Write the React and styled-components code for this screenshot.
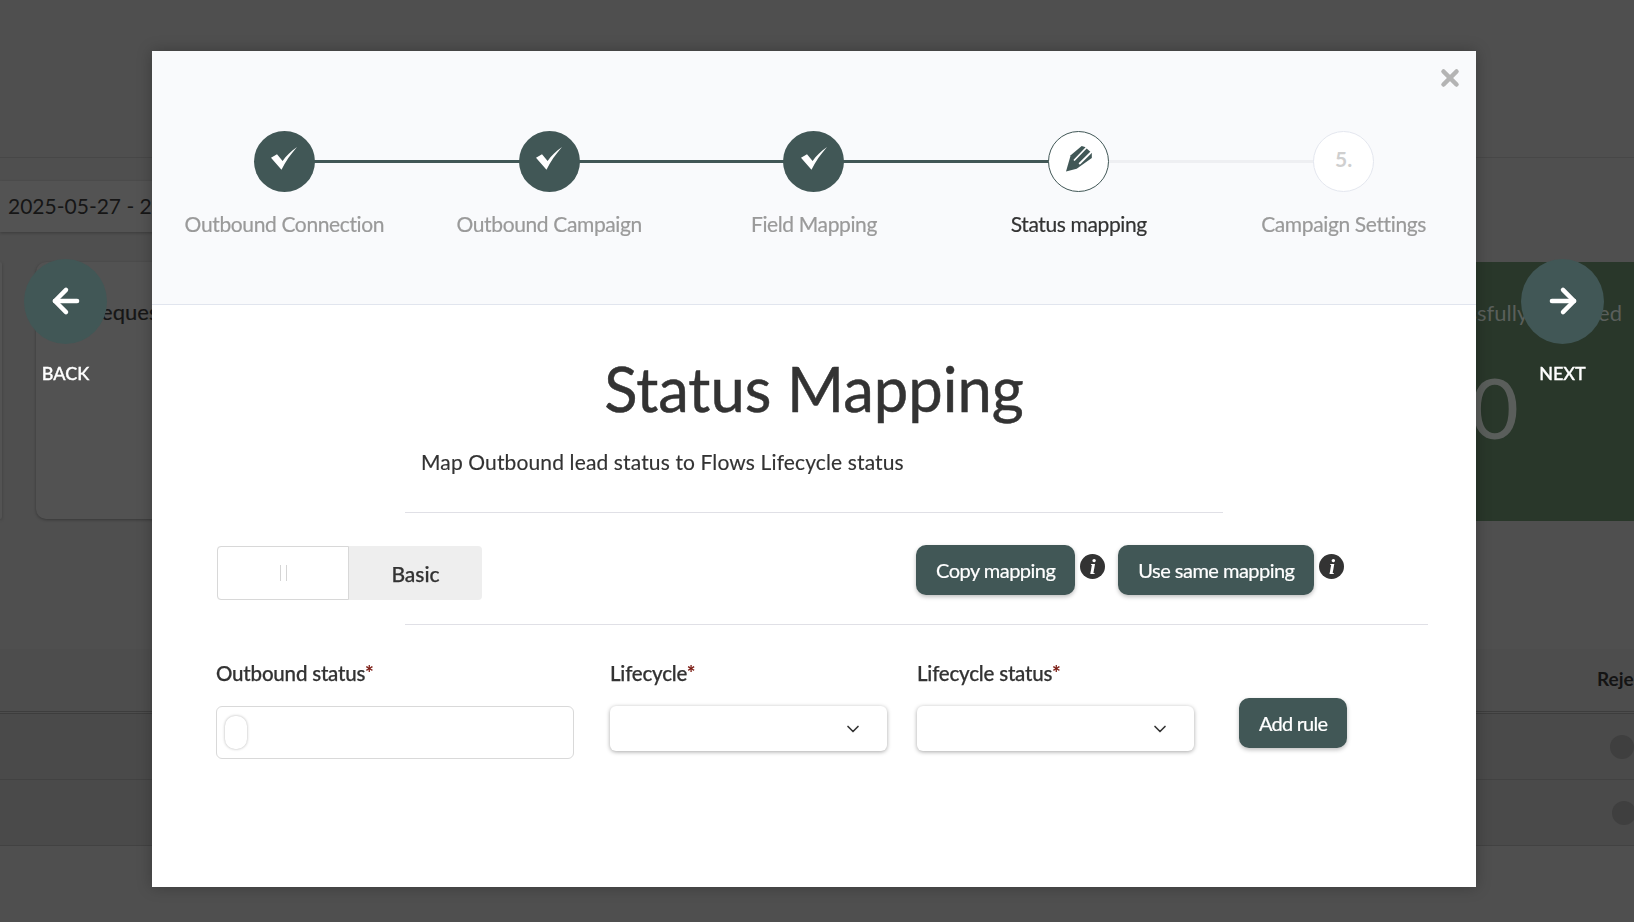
import React from "react";
import styled, { createGlobalStyle } from "styled-components";
import { ArrowLeft, ArrowRight, ChevronDown, X } from "lucide-react";

const GlobalStyle = createGlobalStyle`
  html, body {
    margin: 0;
    height: 100%;
    overflow: hidden;
    background: #4f4f4f;
    font-family: Lato, "Open Sans", sans-serif;
  }
  * { box-sizing: border-box; }
`;

const steps = [
  { label: "Outbound Connection", state: "done" },
  { label: "Outbound Campaign", state: "done" },
  { label: "Field Mapping", state: "done" },
  { label: "Status mapping", state: "active" },
  { label: "Campaign Settings", state: "todo", number: "5." },
];

const CheckIcon = () => (
  <svg width="26" height="23" viewBox="0 0 26 23">
    <path d="M0 10.7 L6 7.3 L11.6 14 C15 9 20 4 26 0 C20 7 14 15 10.5 22.7 Z" fill="#fff" />
  </svg>
);

const NibIcon = () => (
  <svg width="26" height="26" viewBox="0 0 26 26">
    <path d="M0 25.5 L4.7 9.3 L15.7 0 L19 1 L25.8 7 L25.8 12 L10.7 22.7 Z" fill="#415756" />
    <path d="M8 14.5 L20.5 1.5 M13.2 18 L25.9 5.5" stroke="#fff" strokeWidth="1.8" fill="none" />
  </svg>
);

const Field = ({ label, children }) => (
  <FieldBox>
    <FieldLabel>
      {label}
      <Required>*</Required>
    </FieldLabel>
    {children}
  </FieldBox>
);

const App = () => {
  return (
    <>
      <GlobalStyle />
      <Page>
        <TopBand />
        <DateBox>2025-05-27 - 2025-06-27</DateBox>
        <CardRow>
          <EdgeCard />
          <StatCard>Requests</StatCard>
          <GreenCard>
            <GreenLabel>Successfully Imported</GreenLabel>
            <GreenNumber>0</GreenNumber>
          </GreenCard>
        </CardRow>
        <TableHead>Rejected</TableHead>
        <TableRow>
          <RowDot $offset={0} />
        </TableRow>
        <TableRow>
          <RowDot $offset={2} />
        </TableRow>
      </Page>

      <NavButton $side="left">
        <NavCircle>
          <ArrowLeft size={38} strokeWidth={2.8} color="#fff" />
        </NavCircle>
        <NavText>BACK</NavText>
      </NavButton>
      <NavButton $side="right">
        <NavCircle>
          <ArrowRight size={38} strokeWidth={2.8} color="#fff" />
        </NavCircle>
        <NavText>NEXT</NavText>
      </NavButton>

      <Modal>
        <CloseButton>
          <X size={26} strokeWidth={4.2} color="#b4b4b4" />
        </CloseButton>
        <ModalHeader>
          <Stepper>
            {steps.map((step, i) => (
              <Step key={step.label}>
                {i > 0 && <Connector $on={step.state !== "todo"} />}
                <StepCircle $state={step.state}>
                  <StepMark>
                    {step.state === "done" && <CheckIcon />}
                    {step.state === "active" && <NibIcon />}
                    {step.state === "todo" && step.number}
                  </StepMark>
                </StepCircle>
                <StepLabel $active={step.state === "active"}>{step.label}</StepLabel>
              </Step>
            ))}
          </Stepper>
        </ModalHeader>

        <ModalBody>
          <Title>Status Mapping</Title>
          <Subtitle>Map Outbound lead status to Flows Lifecycle status</Subtitle>
          <ShortRule />
          <ControlRow>
            <Toggle>
              <ToggleHandle>
                <Grip />
              </ToggleHandle>
              <ToggleLabel>Basic</ToggleLabel>
            </Toggle>
            <ActionGroup>
              <DarkButton>Copy mapping</DarkButton>
              <InfoDot>i</InfoDot>
              <DarkButton $gap>Use same mapping</DarkButton>
              <InfoDot>i</InfoDot>
            </ActionGroup>
          </ControlRow>
          <WideRule />
          <FormRow>
            <Field label="Outbound status">
              <TagInput>
                <EmptyTag />
              </TagInput>
            </Field>
            <Field label="Lifecycle">
              <Select>
                <ChevronDown size={20} strokeWidth={2} color="#333" />
              </Select>
            </Field>
            <Field label="Lifecycle status">
              <Select>
                <ChevronDown size={20} strokeWidth={2} color="#333" />
              </Select>
            </Field>
            <AddButton>Add rule</AddButton>
          </FormRow>
        </ModalBody>
      </Modal>
    </>
  );
};

export default App;

const Page = styled.div`
  height: 100vh;
  overflow: hidden;
  background: #4f4f4f;
`;

const TopBand = styled.div`
  height: 158px;
  border-bottom: 1px solid #474747;
`;

const DateBox = styled.div`
  width: 400px;
  height: 51px;
  margin-top: 23px;
  padding: 0 0 3px 8px;
  display: flex;
  align-items: center;
  background: #535353;
  box-shadow: 0 1px 3px rgba(0, 0, 0, 0.25);
  color: #161616;
  font-size: 21px;
  white-space: nowrap;
`;

const CardRow = styled.div`
  display: flex;
  height: 259px;
  margin-top: 30px;
`;

const EdgeCard = styled.div`
  width: 2px;
  height: 257px;
  background: #535353;
  border-radius: 0 6px 6px 0;
  box-shadow: 0 1px 3px rgba(0, 0, 0, 0.25);
`;

const StatCard = styled.div`
  width: 400px;
  height: 257px;
  margin-left: 34px;
  padding: 36px 0 0 52px;
  background: #525252;
  border-radius: 10px;
  box-shadow: 0 1px 3px rgba(0, 0, 0, 0.3);
  color: #161616;
  font-size: 22px;
  -webkit-text-stroke: 0.2px #161616;
`;

const GreenCard = styled.div`
  width: 400px;
  height: 259px;
  margin-left: auto;
  padding: 37px 12px 0 0;
  background: #29372a;
  text-align: right;
  white-space: nowrap;
`;

const GreenLabel = styled.div`
  color: #5a5f5b;
  font-size: 22px;
`;

const GreenNumber = styled.div`
  margin-top: 46px;
  padding-right: 103px;
  color: #5a5e5b;
  font-size: 83px;
  line-height: 70px;
  font-weight: 400;
`;

const TableHead = styled.div`
  height: 65px;
  margin-top: 128px;
  padding: 18px 0 0 1597px;
  background: #4d4d4d;
  border-bottom: 3px double #3d3d3d;
  color: #141414;
  font-size: 19px;
  font-weight: 700;
  white-space: nowrap;
`;

const TableRow = styled.div`
  height: 66px;
  padding-top: 21px;
  background: #4a4a4a;
  border-bottom: 1px solid #424242;
`;

const RowDot = styled.div`
  width: 24px;
  height: 24px;
  margin-left: ${(p) => 1610 + p.$offset}px;
  border-radius: 50%;
  background: #3f3f3f;
`;

const NavButton = styled.div`
  position: fixed;
  top: 259px;
  ${(p) => (p.$side === "left" ? "left: 24px;" : "left: 1521px;")}
  width: 83px;
  display: flex;
  flex-direction: column;
  align-items: center;
`;

const NavCircle = styled.div`
  width: 83px;
  height: 85px;
  padding-bottom: 2px;
  display: flex;
  align-items: center;
  justify-content: center;
  border-radius: 50%;
  background: #415756;
`;

const NavText = styled.div`
  margin-top: 18px;
  color: #fff;
  font-size: 18px;
  font-weight: 500;
  -webkit-text-stroke: 0.35px #fff;
`;

const Modal = styled.div`
  position: fixed;
  left: 152px;
  top: 51px;
  width: 1324px;
  height: 836px;
  display: flex;
  flex-direction: column;
  background: #fff;
  box-shadow: 0 0 14px rgba(0, 0, 0, 0.25);
`;

const CloseButton = styled.div`
  position: absolute;
  top: 14px;
  right: 13px;
  display: flex;
`;

const ModalHeader = styled.div`
  height: 254px;
  padding-top: 80px;
  background: #f9fafc;
  border-bottom: 1px solid #e1e5ee;
`;

const Stepper = styled.div`
  display: grid;
  grid-template-columns: repeat(5, 1fr);
`;

const Step = styled.div`
  position: relative;
  display: flex;
  flex-direction: column;
  align-items: center;
`;

const Connector = styled.div`
  position: absolute;
  top: 29px;
  left: -50%;
  width: 100%;
  height: 3px;
  background: ${(p) => (p.$on ? "#415756" : "#eeeff2")};
`;

const StepCircle = styled.div`
  position: relative;
  z-index: 1;
  width: 61px;
  height: 61px;
  display: flex;
  align-items: center;
  justify-content: center;
  border-radius: 50%;
  font-size: 21px;
  font-weight: 700;
  ${(p) => p.$state === "done" && "background: #415756;"}
  ${(p) => p.$state === "active" && "background: #fff; border: 1px solid #415756;"}
  ${(p) => p.$state === "todo" && "background: #fff; border: 1px solid #e3e6ee; color: #cfcfcf;"}
`;

const StepMark = styled.div`
  display: flex;
  margin-bottom: 6px;
`;

const StepLabel = styled.div`
  margin-top: 19px;
  color: ${(p) => (p.$active ? "#333" : "#9a9a9a")};
  font-size: 21px;
  line-height: 26px;
  letter-spacing: -0.37px;
  white-space: nowrap;
  -webkit-text-stroke: 0.2px ${(p) => (p.$active ? "#333" : "#9a9a9a")};
`;

const ModalBody = styled.div`
  flex: 1;
  padding: 0 48px 0 65px;
`;

const Title = styled.h1`
  margin: 47px 0 0 -65px;
  width: 1324px;
  text-align: center;
  color: #333;
  font-size: 61.5px;
  line-height: 72px;
  font-weight: 400;
  -webkit-text-stroke: 0.5px #333;
`;

const Subtitle = styled.p`
  margin: 24px 0 0 204px;
  color: #333;
  font-size: 21px;
  line-height: 28px;
  letter-spacing: 0.13px;
  -webkit-text-stroke: 0.15px #333;
`;

const ShortRule = styled.div`
  width: 818px;
  height: 1px;
  margin: 36px 0 0 188px;
  background: #e0e0e6;
`;

const ControlRow = styled.div`
  display: flex;
  align-items: flex-start;
  margin-top: 33px;
`;

const Toggle = styled.div`
  width: 265px;
  height: 54px;
  display: flex;
  background: #eee;
  border-radius: 4px;
`;

const ToggleHandle = styled.div`
  width: 132px;
  display: flex;
  align-items: center;
  justify-content: center;
  background: #fff;
  border: 1px solid #d8d8d8;
  border-radius: 4px 0 0 4px;
`;

const Grip = styled.div`
  width: 7px;
  height: 16px;
  border-left: 1px solid #d5d5d5;
  border-right: 1px solid #d5d5d5;
`;

const ToggleLabel = styled.div`
  flex: 1;
  display: flex;
  align-items: center;
  justify-content: center;
  color: #333;
  font-size: 21px;
  font-weight: 500;
  -webkit-text-stroke: 0.25px #333;
`;

const ActionGroup = styled.div`
  display: flex;
  align-items: flex-start;
  margin: -1px 0 0 434px;
`;

const DarkButton = styled.div`
  height: 50px;
  padding: 0 20px;
  margin-left: ${(p) => (p.$gap ? "13px" : "0")};
  display: flex;
  align-items: center;
  background: #415756;
  border-radius: 10px;
  box-shadow: 0 2px 4px rgba(0, 0, 0, 0.25);
  color: #fff;
  font-size: 20px;
  letter-spacing: -0.52px;
  -webkit-text-stroke: 0.2px #fff;
  white-space: nowrap;
`;

const InfoDot = styled.div`
  width: 25px;
  height: 25px;
  margin: 9px 0 0 5px;
  display: flex;
  align-items: center;
  justify-content: center;
  border-radius: 50%;
  background: #333;
  color: #fff;
  font-family: "Liberation Serif", serif;
  font-style: italic;
  font-weight: 700;
  font-size: 22px;
`;

const WideRule = styled.div`
  width: 1023px;
  height: 1px;
  margin: 24px 0 0 188px;
  background: #e0e0e6;
`;

const FormRow = styled.div`
  display: flex;
  align-items: flex-start;
  margin: 35px 0 0 -1px;
`;

const FieldBox = styled.div`
  display: flex;
  flex-direction: column;
  margin-right: 30px;
  &:first-child {
    margin-right: 36px;
  }
`;

const FieldLabel = styled.div`
  height: 26px;
  margin-bottom: 20px;
  color: #333;
  font-size: 20.5px;
  line-height: 26px;
  font-weight: 500;
  letter-spacing: -0.2px;
  -webkit-text-stroke: 0.25px #333;
`;

const Required = styled.span`
  color: #7a1a12;
  -webkit-text-stroke: 0.25px #7a1a12;
`;

const TagInput = styled.div`
  width: 358px;
  height: 53px;
  padding: 9px 0 0 8px;
  background: #fff;
  border: 1px solid #d9d9d9;
  border-radius: 6px;
`;

const EmptyTag = styled.div`
  width: 22px;
  height: 33px;
  border-radius: 10px;
  background: #fff;
  box-shadow: 0 0 3px rgba(0, 0, 0, 0.3);
`;

const Select = styled.div`
  width: 277px;
  height: 45px;
  padding-right: 24px;
  display: flex;
  align-items: center;
  justify-content: flex-end;
  background: #fff;
  border-radius: 6px;
  box-shadow: 0 1px 4px rgba(0, 0, 0, 0.35);
`;

const AddButton = styled(DarkButton)`
  margin: 38px 0 0 15px;
  letter-spacing: -0.8px;
`;
